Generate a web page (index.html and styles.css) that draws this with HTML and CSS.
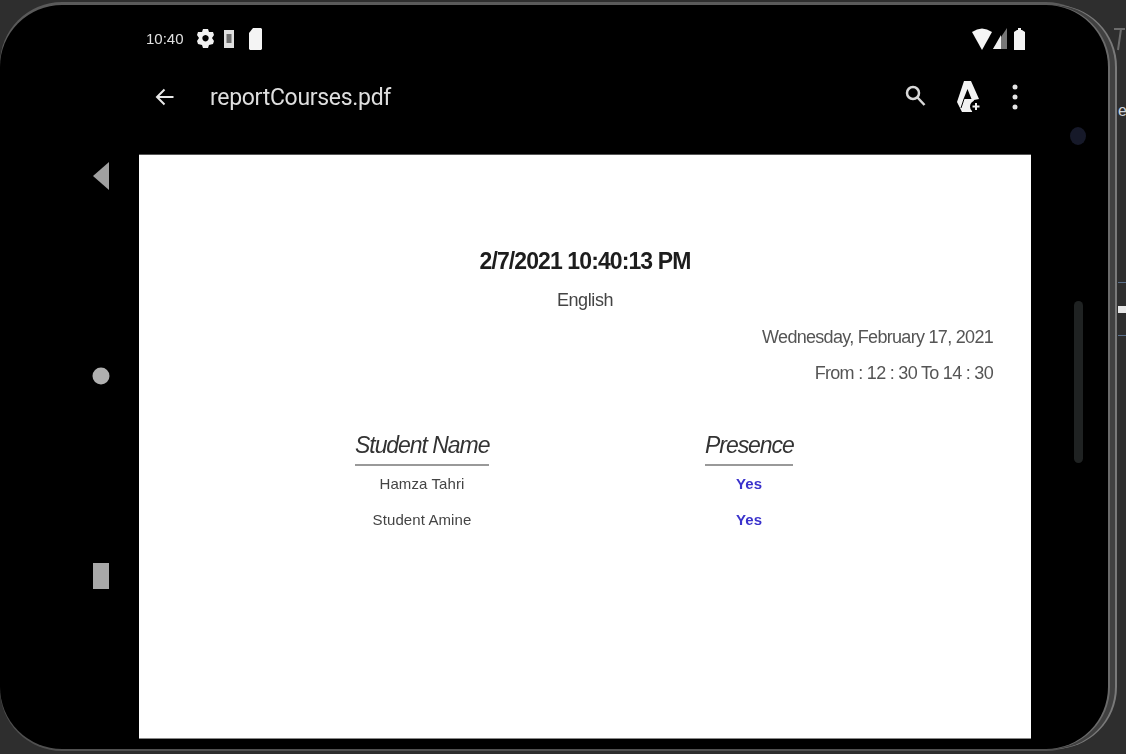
FILE: index.html
```html
<!DOCTYPE html>
<html>
<head>
  <meta charset="utf-8">
  <title>reportCourses.pdf</title>
  <link rel="stylesheet" href="styles.css">
</head>
<body>
  <div class="phone">
    <div class="nav-col">
      <div class="nav-icon">
        <svg width="18" height="30" viewBox="0 0 18 30"><polygon points="17,1 17,29 1,15" fill="#a0a0a0"/></svg>
      </div>
      <div class="nav-icon">
        <svg width="18" height="18" viewBox="0 0 18 18"><circle cx="9" cy="9" r="8.5" fill="#b0b0b0"/></svg>
      </div>
      <div class="nav-icon">
        <svg width="18" height="27" viewBox="0 0 18 27"><rect x="1" y="0" width="16" height="26" fill="#a8a8a8"/></svg>
      </div>
    </div>

    <div class="main-col">
      <div class="status-bar">
        <span class="clock">10:40</span>
        <svg class="gear" width="17" height="19" viewBox="0 0 17 19"><path fill-rule="evenodd" fill="#f0f0f0" d="M6 0h5l1 3 4 0 1 3-2 3 2 3-1 3-4 1-1 3H6l-1-3-4-1-1-3 2-3-2-3 1-3 4 0zM8.500 6a3.200 3.200 0 1 0 .01 0z"/></svg>
        <svg class="sd" width="12" height="18" viewBox="0 0 12 18"><rect x="1" y="0" width="10" height="18" fill="#e0e0e0"/><rect x="3.500" y="4" width="5" height="9" fill="#6c6c6c"/></svg>
        <svg class="card" width="13" height="22" viewBox="0 0 13 22"><path fill="#f4f4f4" d="M4 0h8l1 1v20l-1 1H1l-1-1V5z"/></svg>
        <span class="spacer"></span>
        <svg class="wifi" width="20" height="22" viewBox="0 0 20 22"><path fill="#f6f6f6" d="M0 4Q10-3 20 4L10 22z"/></svg>
        <svg class="signal" width="14" height="21" viewBox="0 0 14 21"><polygon points="14,0 14,21 0,21" fill="#777"/><polygon points="8,7 8,21 0,21" fill="#f0f0f0"/></svg>
        <svg class="batt" width="11" height="22" viewBox="0 0 11 22"><path fill="#f4f4f4" d="M3 2h1V0h3v2h1l3 2v18H0V4z"/></svg>
      </div>

      <div class="app-bar">
        <svg class="back" width="20" height="20" viewBox="0 0 20 20"><path d="M18.500 10H2M9.500 2.500L2 10l7.500 7.500" fill="none" stroke="#e8e8e8" stroke-width="2"/></svg>
        <span class="file-name">reportCourses.pdf</span>
        <span class="spacer"></span>
        <svg class="search" width="21" height="30" viewBox="0 0 21 30"><circle cx="8" cy="11" r="6" fill="none" stroke="#d8d8d8" stroke-width="2.500"/><path d="M12.500 15.500L19.500 23" stroke="#d8d8d8" stroke-width="2.500" fill="none"/></svg>
        <svg class="drive" width="24" height="34" viewBox="0 0 24 34"><path fill="#f2f2f2" fill-rule="evenodd" d="M7 1h7l8 18-5 1-1 4-1 8H5L0 22zM10.500 9l-4 10h8z"/><path d="M7 19L4 28" stroke="#000" stroke-width="1" fill="none"/><circle cx="19" cy="26.500" r="6" fill="#000"/><path d="M19 23v7M15.500 26.500h7" stroke="#f2f2f2" stroke-width="2" fill="none"/></svg>
        <svg class="more" width="6" height="26" viewBox="0 0 6 26"><circle cx="3" cy="3" r="2.500" fill="#e4e4e4"/><circle cx="3" cy="13" r="2.500" fill="#e4e4e4"/><circle cx="3" cy="23" r="2.500" fill="#e4e4e4"/></svg>
      </div>

      <div class="page">
        <div class="report-title">2/7/2021 10:40:13 PM</div>
        <div class="report-course">English</div>
        <div class="report-date">Wednesday, February 17, 2021</div>
        <div class="report-time">From : 12 : 30 To 14 : 30</div>

        <div class="report-table">
          <div class="head">Student Name</div>
          <div class="head">Presence</div>
          <div class="cell">Hamza Tahri</div>
          <div class="cell yes">Yes</div>
          <div class="cell">Student Amine</div>
          <div class="cell yes">Yes</div>
        </div>
      </div>
    </div>

    <div class="side-col">
      <div class="camera"></div>
      <div class="slot"></div>
    </div>
  </div>

  <div class="behind">
    <svg class="behind-glyph" width="13" height="24" viewBox="0 0 13 24"><path d="M1 2h11M8 2L5 23" fill="none" stroke="#6c6c6c" stroke-width="2"/></svg>
    <span class="behind-letter">e</span>
    <div class="behind-tab"></div>
  </div>
</body>
</html>
```

FILE: styles.css
```css
html, body {
  margin: 0;
  height: 100%;
}

body {
  height: 754px;
  overflow: hidden;
  padding-top: 5px;
  box-sizing: border-box;
  background: #2e2e2e;
  font-family: "Liberation Sans", Arial, sans-serif;
}

.phone {
  display: flex;
  width: 1108px;
  height: 744px;
  background: #000;
  border-radius: 62px;
  box-shadow: 2px 0 0 0 #6a6a6a, 7px 0 0 0 #414141, 9px 0 0 0 #7a7a7a, 0 -3px 0 0 #5a5a5a, 0 2px 0 0 #505050;
  filter: blur(0.7px);
}

.nav-col {
  width: 139px;
  flex-shrink: 0;
  box-sizing: border-box;
  padding: 157px 29px 0 0;
  display: flex;
  flex-direction: column;
  align-items: flex-end;
  gap: 172px;
}

.nav-icon {
  height: 28px;
  display: flex;
  align-items: center;
}

.main-col {
  flex: 1;
  display: flex;
  flex-direction: column;
}

.spacer {
  flex: 1;
}

.status-bar {
  height: 62px;
  box-sizing: border-box;
  padding: 19px 6px 14px 7px;
  display: flex;
  align-items: center;
  color: #e0e0e0;
  flex-shrink: 0;
}

.clock {
  font-size: 15px;
  width: 51px;
}

.gear {
  margin-right: 9px;
}

.sd {
  margin-right: 14px;
}

.wifi {
  margin-right: 1px;
}

.batt {
  margin-left: 7px;
}

.app-bar {
  height: 60px;
  margin-bottom: 28px;
  box-sizing: border-box;
  padding: 0 13px 0 16px;
  display: flex;
  align-items: center;
  flex-shrink: 0;
}

.file-name {
  margin-left: 35px;
  font-family: Roboto, sans-serif;
  font-size: 23px;
  letter-spacing: -0.3px;
  color: #dedede;
}

.search {
  margin-right: 31px;
}

.drive {
  margin-right: 31px;
}

.page {
  flex: 1;
  margin-bottom: 11px;
  background: #fff;
  box-shadow: 0 1px 0 #888, 0 -1px 0 #555;
  color: #333;
}

.report-title {
  margin-top: 90px;
  text-align: center;
  font-size: 23px;
  line-height: 32px;
  font-weight: 700;
  color: #1d1d1d;
  letter-spacing: -0.9px;
}

.report-course {
  margin-top: 11px;
  text-align: center;
  font-size: 18px;
  line-height: 24px;
  color: #444;
  letter-spacing: -0.4px;
}

.report-date,
.report-time {
  padding-right: 38px;
  text-align: right;
  font-size: 18px;
  line-height: 36px;
  color: #555;
  letter-spacing: -0.7px;
}

.report-date {
  margin-top: 7px;
}

.report-table {
  margin-top: 36px;
  padding-left: 216px;
  display: grid;
  grid-template-columns: 134px 88px;
  column-gap: 216px;
}

.head {
  font-size: 23px;
  line-height: 37px;
  font-style: italic;
  color: #333;
  text-align: center;
  white-space: nowrap;
  letter-spacing: -1.05px;
  border-bottom: 2px solid #999;
}

.cell {
  font-size: 15px;
  line-height: 36px;
  text-align: center;
  color: #444;
  letter-spacing: 0.1px;
}

.yes {
  font-weight: 700;
  color: #3a32cc;
}

.behind {
  position: absolute;
  top: 0;
  right: 0;
  width: 13px;
  height: 340px;
}

.behind-glyph {
  position: absolute;
  top: 27px;
  left: 0;
}

.behind-letter {
  position: absolute;
  top: 102px;
  right: -1px;
  font-size: 16px;
  color: #cfd3da;
}

.behind-tab {
  position: absolute;
  top: 282px;
  left: 5px;
  right: 0;
  height: 52px;
  border-top: 1px solid #5a6f8a;
  border-bottom: 1px solid #5a6f8a;
  background: linear-gradient(#2e2e2e 44%, #e8e8e8 44%, #e8e8e8 58%, #2e2e2e 58%);
}

.side-col {
  width: 77px;
  flex-shrink: 0;
  box-sizing: border-box;
  padding-left: 17px;
  display: flex;
  flex-direction: column;
  align-items: center;
}

.camera {
  width: 16px;
  height: 18px;
  margin-top: 122px;
  border-radius: 50%;
  background: #161929;
}

.slot {
  width: 9px;
  height: 162px;
  margin-top: 156px;
  border-radius: 5px;
  background: #1f2222;
}
```
